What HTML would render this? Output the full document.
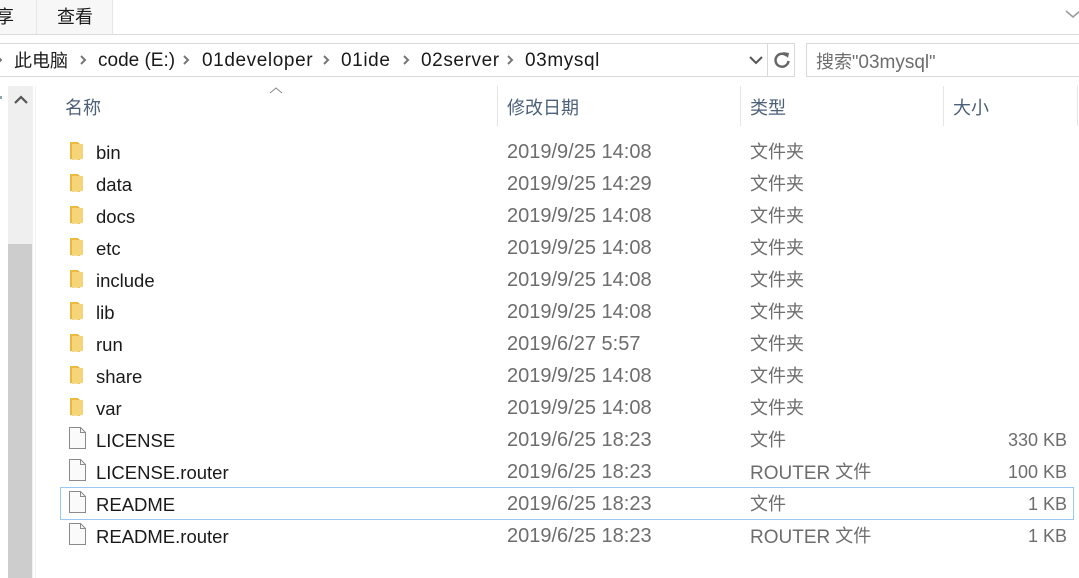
<!DOCTYPE html>
<html><head><meta charset="utf-8"><style>
body{margin:0;width:1079px;height:578px;background:#fff;position:relative;overflow:hidden;font-family:"Liberation Sans","Noto Sans CJK SC",sans-serif;font-size:18px;color:#1a1a1a}
.a{position:absolute;white-space:nowrap}
.row{position:absolute;left:0;width:1079px;height:32px}
.row .a{top:7px}
.row .c{top:3px}
.row .dt{top:6px;font-size:20px}
.g{color:#6d6d6d}
.hd{color:#4c607a}
</style></head><body>
<div class="a" style="left:0;top:0;width:36px;height:34px;background:#f7f7f7;border-right:1px solid #e6e6e6"></div>
<div class="a" style="left:37px;top:0;width:75px;height:34px;background:#f7f7f7;border-right:1px solid #e6e6e6"></div>
<div class="a" style="left:-4px;top:3px">享</div>
<div class="a" style="left:57px;top:3px">查看</div>
<svg class="a" style="left:1065px;top:8px" width="16" height="12"><path d="M1 3l7 6 7-6" stroke="#999" fill="none" stroke-width="1.5"/></svg>
<div class="a" style="left:0;top:34px;width:1079px;height:1px;background:#dcdcdc"></div>
<div class="a" style="left:0;top:43px;width:767px;height:32px;border:1px solid #d9d9d9;border-left:none"></div>
<div class="a" style="left:767px;top:43px;width:26px;height:32px;border:1px solid #d9d9d9"></div>
<div class="a" style="left:806px;top:43px;width:280px;height:32px;border:1px solid #d9d9d9"></div>
<div class="a" style="left:14px;top:47px">此电脑</div>
<div class="a" style="left:98px;top:50px;font-size:19px">code (E:)</div>
<div class="a" style="left:202px;top:50px;font-size:19px;letter-spacing:0.6px">01developer</div>
<div class="a" style="left:341px;top:50px;font-size:19px;letter-spacing:0.6px">01ide</div>
<div class="a" style="left:421px;top:50px;font-size:19px;letter-spacing:0.6px">02server</div>
<div class="a" style="left:525px;top:50px;font-size:19px;letter-spacing:0.6px">03mysql</div>
<svg class="a" style="left:0;top:50px" width="530" height="20" fill="none" stroke="#777" stroke-width="2">
<path d="M-2 7l3 3-3 3"/><path d="M81 6l4 4-4 4"/><path d="M184 6l4 4-4 4"/><path d="M324 6l4 4-4 4"/><path d="M404 6l4 4-4 4"/><path d="M508 6l4 4-4 4"/></svg>
<svg class="a" style="left:748px;top:53px" width="16" height="14"><path d="M2 4l6 6 6-6" stroke="#555" fill="none" stroke-width="2"/></svg>
<svg class="a" style="left:772px;top:50px" width="20" height="20"><path d="M15 6A6.5 6.5 0 1 0 16.5 11" stroke="#666" fill="none" stroke-width="2.5"/><path d="M11 2l6 1-1 5z" fill="#666"/></svg>
<div class="a" style="left:816px;top:48px;color:#6d6d6d">搜索"<span style="font-size:19px">03mysql</span>"</div>
<div class="a" style="left:8px;top:86px;width:25px;height:492px;background:#efefef"></div>
<div class="a" style="left:8px;top:244px;width:24px;height:334px;background:#cdcdcd"></div>
<div class="a" style="left:35px;top:86px;width:1px;height:492px;background:#f3f3f3"></div>
<svg class="a" style="left:14px;top:95px" width="14" height="10"><path d="M1 8l6-6 6 6" stroke="#555" fill="none" stroke-width="2.2"/></svg>
<div class="a" style="left:-2px;top:96px;width:4px;height:3px;background:#8aa"></div>
<svg class="a" style="left:269px;top:86px" width="14" height="9"><path d="M1 7l6-5 6 5" stroke="#888" fill="none"/></svg>
<div class="a hd" style="left:65px;top:94px">名称</div>
<div class="a hd" style="left:507px;top:94px">修改日期</div>
<div class="a hd" style="left:750px;top:94px">类型</div>
<div class="a hd" style="left:953px;top:94px">大小</div>
<div class="a" style="left:497px;top:86px;width:1px;height:40px;background:#e5e5e5"></div>
<div class="a" style="left:740px;top:86px;width:1px;height:40px;background:#e5e5e5"></div>
<div class="a" style="left:943px;top:86px;width:1px;height:40px;background:#e5e5e5"></div>
<div class="a" style="left:1077px;top:86px;width:1px;height:40px;background:#e5e5e5"></div>
<div id="rows"></div>
<div class="a" style="left:60px;top:487px;width:1012px;height:31px;border:1px solid #99c9f0"></div>
<script>
var d=[["bin","2019/9/25 14:08","文件夹",""],["data","2019/9/25 14:29","文件夹",""],["docs","2019/9/25 14:08","文件夹",""],["etc","2019/9/25 14:08","文件夹",""],["include","2019/9/25 14:08","文件夹",""],["lib","2019/9/25 14:08","文件夹",""],["run","2019/6/27 5:57","文件夹",""],["share","2019/9/25 14:08","文件夹",""],["var","2019/9/25 14:08","文件夹",""],["LICENSE","2019/6/25 18:23","文件","330 KB"],["LICENSE.router","2019/6/25 18:23","ROUTER 文件","100 KB"],["README","2019/6/25 18:23","文件","1 KB"],["README.router","2019/6/25 18:23","ROUTER 文件","1 KB"]];
var h="";
d.forEach(function(r,i){var t=135+i*32;
var ic=r[3]?'<svg class="a" style="left:68px;top:3px" width="20" height="24"><path d="M1.5 1.5h11l5 5v16h-16z" fill="#fafafa" stroke="#8a8a8a"/><path d="M12.5 1.5v5h5" fill="none" stroke="#8a8a8a"/></svg>':'<svg class="a" style="left:70px;top:6px" width="14" height="20"><path d="M0 1h8l2 2v16l-10 -1z" fill="#e8b93c"/><path d="M2 3h11v15l-11 1z" fill="#f5d47a"/></svg>';
var ty=r[2].indexOf("ROUTER")==0?'<div class="a g c" style="left:750px"><span style="position:relative;top:1px;font-size:19px">ROUTER</span> 文件</div>':'<div class="a g c" style="left:750px">'+r[2]+'</div>';
h+='<div class="row" style="top:'+t+'px">'+ic+'<div class="a" style="left:96px;font-size:18.5px">'+r[0]+'</div><div class="a g dt" style="left:507px">'+r[1]+'</div>'+ty+'<div class="a g" style="right:12px;font-size:18px">'+r[3]+'</div></div>';});
document.getElementById("rows").innerHTML=h;
</script>
</body></html>
